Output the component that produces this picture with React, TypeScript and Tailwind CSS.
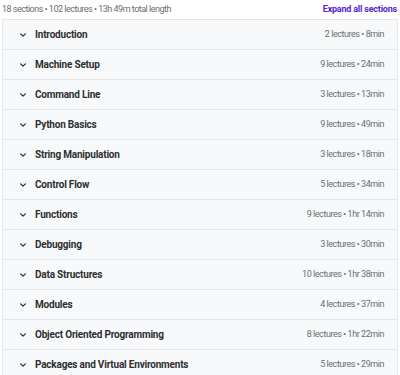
const sections = [
  { title: 'Introduction', meta: '2 lectures • 8min' },
  { title: 'Machine Setup', meta: '9 lectures • 24min' },
  { title: 'Command Line', meta: '3 lectures • 13min' },
  { title: 'Python Basics', meta: '9 lectures • 49min' },
  { title: 'String Manipulation', meta: '3 lectures • 18min' },
  { title: 'Control Flow', meta: '5 lectures • 34min' },
  { title: 'Functions', meta: '9 lectures • 1hr 14min' },
  { title: 'Debugging', meta: '3 lectures • 30min' },
  { title: 'Data Structures', meta: '10 lectures • 1hr 38min' },
  { title: 'Modules', meta: '4 lectures • 37min' },
  { title: 'Object Oriented Programming', meta: '8 lectures • 1hr 22min' },
  { title: 'Packages and Virtual Environments', meta: '5 lectures • 29min' },
];

const Chevron = () => (
  <svg width="8" height="8" viewBox="0 0 10 10" className="shrink-0">
    <path d="M2 3.5 L5 6.5 L8 3.5" fill="none" stroke="#2d2f31" strokeWidth="1.5" strokeLinecap="round" strokeLinejoin="round" />
  </svg>
);

export default function App() {
  return (
    <div className="w-[400px] h-[375px] overflow-hidden bg-white font-['Roboto',sans-serif] text-[#2d2f31]">
      {/* Summary */}
      <div className="flex items-center justify-between h-[19px] px-[2px]">
        <span className="text-[9px] tracking-[-0.5px] text-[#6a6f73]">18 sections • 102 lectures • 13h 49m total length</span>
        <span className="text-[9px] tracking-[-0.2px] font-bold text-[#5624d0] pr-[1px]">Expand all sections</span>
      </div>

      {/* Curriculum */}
      <div className="mx-[2px] border border-[#e4e6e8]">
        {sections.map((s, i) => (
          <div
            key={s.title}
            className={`flex items-center justify-between bg-[#f7f9fa] pl-4 pr-[13px] ${i > 0 ? 'h-[30px] border-t border-[#e4e6e8]' : 'h-[29px]'}`}
          >
            <div className="flex items-center gap-[8px]">
              <Chevron />
              <span className="text-[10px] tracking-[-0.2px] font-bold">{s.title}</span>
            </div>
            <span className="text-[9px] tracking-[-0.45px] text-[#6a6f73]">{s.meta}</span>
          </div>
        ))}
      </div>
    </div>
  );
}
